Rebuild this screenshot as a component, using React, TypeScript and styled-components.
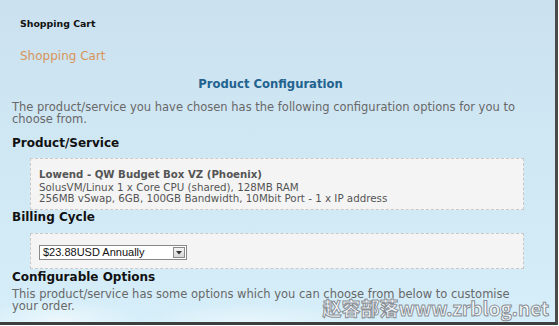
import React from "react";
import styled, { createGlobalStyle } from "styled-components";

const Global = createGlobalStyle`
  html, body { margin: 0; padding: 0; background: #ffffff; }
  body { font-family: "DejaVu Sans", Verdana, sans-serif; }
`;

const Frame = styled.div`
  position: relative;
  box-sizing: border-box;
  width: 558px;
  height: 325px;
  overflow: hidden;
  border-right: 3px solid #4a4a4a;
  border-bottom: 3px solid #3e3e3e;
  background:
    radial-gradient(ellipse 120px 30px at 60px 320px, rgba(255,255,255,0.55), rgba(255,255,255,0) 70%),
    radial-gradient(ellipse 160px 28px at 250px 322px, rgba(255,255,255,0.45), rgba(255,255,255,0) 70%),
    linear-gradient(to bottom, #cbe1ef 0%, #cfe6f3 40%, #d5eef9 100%);
  padding: 17px 0 0 0;
`;

const TopTitle = styled.div`
  font-family: "DejaVu Sans", Verdana, sans-serif;
  font-weight: bold;
  font-size: 9.4px;
  color: #111;
  padding-left: 20px;
  line-height: 13px;
`;

const PageTitle = styled.div`
  font-family: "DejaVu Sans", Verdana, sans-serif;
  font-size: 12px;
  color: #d9955a;
  padding-left: 20px;
  margin-top: 19px;
  line-height: 14px;
`;

const Content = styled.div`
  padding: 0 12px;
  margin-top: 14px;
`;

const CenterHeading = styled.div`
  text-align: center;
  font-weight: bold;
  font-size: 11.6px;
  color: #22628f;
  line-height: 14px;
  padding-right: 14px;
`;

const Para = styled.p<{ $gap: number }>`
  margin: ${(p) => p.$gap}px 0 0 0;
  font-size: 11.5px;
  line-height: 11.5px;
  color: #686868;
  width: 522px;
`;

const SectionHeading = styled.div<{ $gap: number }>`
  margin-top: ${(p) => p.$gap}px;
  font-weight: bold;
  font-size: 12px;
  line-height: 14px;
  color: #111;
`;

const Box = styled.div<{ $top: number; $pad: string }>`
  margin: ${(p) => p.$top}px 19px 0 18px;
  border: 1px dashed #c8c8c8;
  background: #f4f4f4;
  padding: ${(p) => p.$pad};
`;

const ProductName = styled.div`
  font-weight: bold;
  font-size: 10.2px;
  line-height: 12px;
  margin-bottom: 1px;
  color: #555;
`;

const ProductLine = styled.div`
  font-size: 10.3px;
  line-height: 11px;
  color: #555;
`;

const SelectBox = styled.div`
  display: flex;
  align-items: center;
  width: 148px;
  height: 15px;
  box-sizing: border-box;
  border: 1px solid #888;
  background: #fff;
`;

const SelectText = styled.span`
  flex: 1;
  font-family: "Liberation Sans", Arial, sans-serif;
  font-size: 11px;
  color: #111;
  padding-left: 3px;
  line-height: 13px;
`;

const ArrowBtn = styled.span`
  width: 12px;
  height: 11px;
  margin-right: 1px;
  border: 1px solid #8a8a8a;
  background: linear-gradient(#f4f4f4, #d6d6d6);
  display: flex;
  align-items: center;
  justify-content: center;
  box-sizing: border-box;
`;

const Watermark = styled.div`
  position: absolute;
  right: 6px;
  bottom: 3px;
  font-family: "Noto Sans CJK SC", "DejaVu Sans", sans-serif;
  font-size: 19px;
  font-weight: bold;
  color: rgba(255, 255, 255, 0.85);
  -webkit-text-stroke: 1px #8a8f96;
  white-space: nowrap;
  line-height: 22px;
`;

export default function App() {
  return (
    <>
      <Global />
      <Frame>
        <TopTitle>Shopping Cart</TopTitle>
        <PageTitle>Shopping Cart</PageTitle>
        <Content>
          <CenterHeading>Product Configuration</CenterHeading>
          <Para $gap={11}>
            The product/service you have chosen has the following configuration options for you to choose from.
          </Para>
          <SectionHeading $gap={11}>Product/Service</SectionHeading>
          <Box $top={8} $pad="10px 8px 5px 8px">
            <ProductName>Lowend - QW Budget Box VZ (Phoenix)</ProductName>
            <ProductLine>SolusVM/Linux 1 x Core CPU (shared), 128MB RAM</ProductLine>
            <ProductLine>256MB vSwap, 6GB, 100GB Bandwidth, 10Mbit Port - 1 x IP address</ProductLine>
          </Box>
          <SectionHeading $gap={0}>Billing Cycle</SectionHeading>
          <Box $top={9} $pad="11px 8px 8px 8px">
            <SelectBox>
              <SelectText>$23.88USD Annually</SelectText>
              <ArrowBtn>
                <svg width="6" height="4" viewBox="0 0 6 4">
                  <path d="M0 0 H6 L3 3.5 Z" fill="#333" />
                </svg>
              </ArrowBtn>
            </SelectBox>
          </Box>
          <SectionHeading $gap={1}>Configurable Options</SectionHeading>
          <Para $gap={5}>
            This product/service has some options which you can choose from below to customise your order.
          </Para>
        </Content>
        <Watermark>赵容部落www.zrblog.net</Watermark>
      </Frame>
    </>
  );
}
